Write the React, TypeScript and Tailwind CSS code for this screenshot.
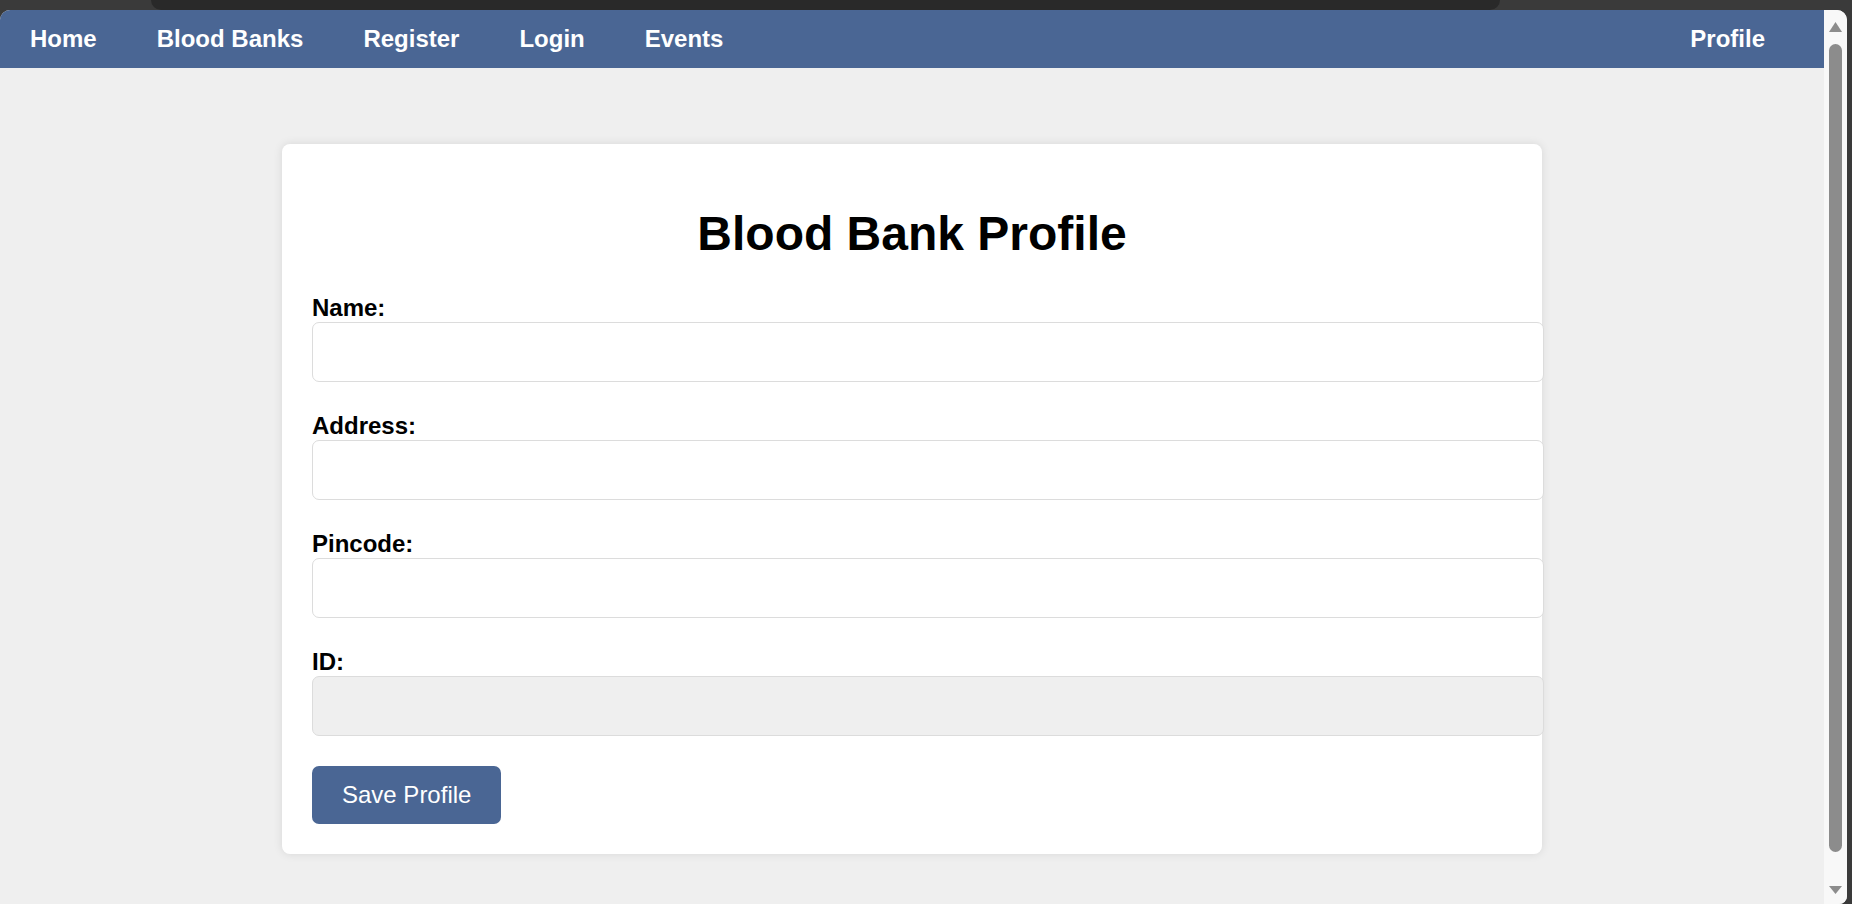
import React from 'react'

const font = { fontFamily: '"Liberation Sans", Arial, sans-serif' }

const links = ['Home', 'Blood Banks', 'Register', 'Login', 'Events']

function Field({ label, disabled }: { label: string; disabled?: boolean }) {
  return (
    <div>
      <label className="block text-[24px] font-bold leading-[28px] text-black">{label}</label>
      <input
        type="text"
        disabled={disabled}
        className={
          'box-content block w-full h-[28px] px-[15px] py-[15px] mb-[30px] border border-[#dcdcdc] rounded-[7px] text-[24px] outline-none ' +
          (disabled ? 'bg-[#efefef]' : 'bg-white')
        }
      />
    </div>
  )
}

function Scrollbar() {
  return (
    <div className="w-[23px] shrink-0 bg-[#f8f8f8] flex flex-col items-center pt-[12px] pb-[10px]">
      {/* up arrow */}
      <svg width="13" height="10" viewBox="0 0 13 10">
        <polygon points="6.5,0 13,10 0,10" fill="#8c8c8c" />
      </svg>
      <div className="mt-[12px] w-[13px] flex-1 rounded-full bg-[#8c8c8c]" />
      <svg className="mt-[34px]" width="13" height="8" viewBox="0 0 13 8">
        <polygon points="0,0 13,0 6.5,8" fill="#8c8c8c" />
      </svg>
    </div>
  )
}

export default function App() {
  return (
    <div className="w-[1852px] h-[904px] bg-[#3a3a3a] flex flex-col overflow-hidden" style={font}>
      {/* browser chrome strip */}
      <div className="h-[10px] shrink-0 flex">
        <div className="w-[151px]" />
        <div className="w-[1349px] bg-[#292929] rounded-b-[10px]" />
      </div>

      <div className="flex-1 flex pr-[5px] min-h-0">
        <div className="flex-1 flex rounded-t-[10px] rounded-br-[8px] overflow-hidden bg-[#efefef]">
          <div className="flex-1 flex flex-col min-w-0">
            {/* Navbar */}
            <nav className="h-[58px] shrink-0 bg-[#4a6694] flex items-center pr-[29px]">
              {links.map((l) => (
                <a key={l} className="px-[30px] text-[24px] font-bold leading-[1.15] text-white">
                  {l}
                </a>
              ))}
              <a className="ml-auto px-[30px] text-[24px] font-bold leading-[1.15] text-white">Profile</a>
            </nav>

            {/* Profile card */}
            <div className="mt-[76px] mx-auto w-[1260px] bg-white rounded-[8px] shadow-[0_0_10px_rgba(0,0,0,0.1)] p-[30px]">
              <h1 className="mt-[32px] mb-[33px] text-center text-[48px] font-bold leading-[1.15] text-black">
                Blood Bank Profile
              </h1>
              <Field label="Name:" />
              <Field label="Address:" />
              <Field label="Pincode:" />
              <Field label="ID:" disabled />
              <button className="bg-[#4a6694] text-white text-[24px] leading-[1.15] px-[30px] py-[15px] rounded-[7px]">
                Save Profile
              </button>
            </div>
          </div>
          <Scrollbar />
        </div>
      </div>
    </div>
  )
}
